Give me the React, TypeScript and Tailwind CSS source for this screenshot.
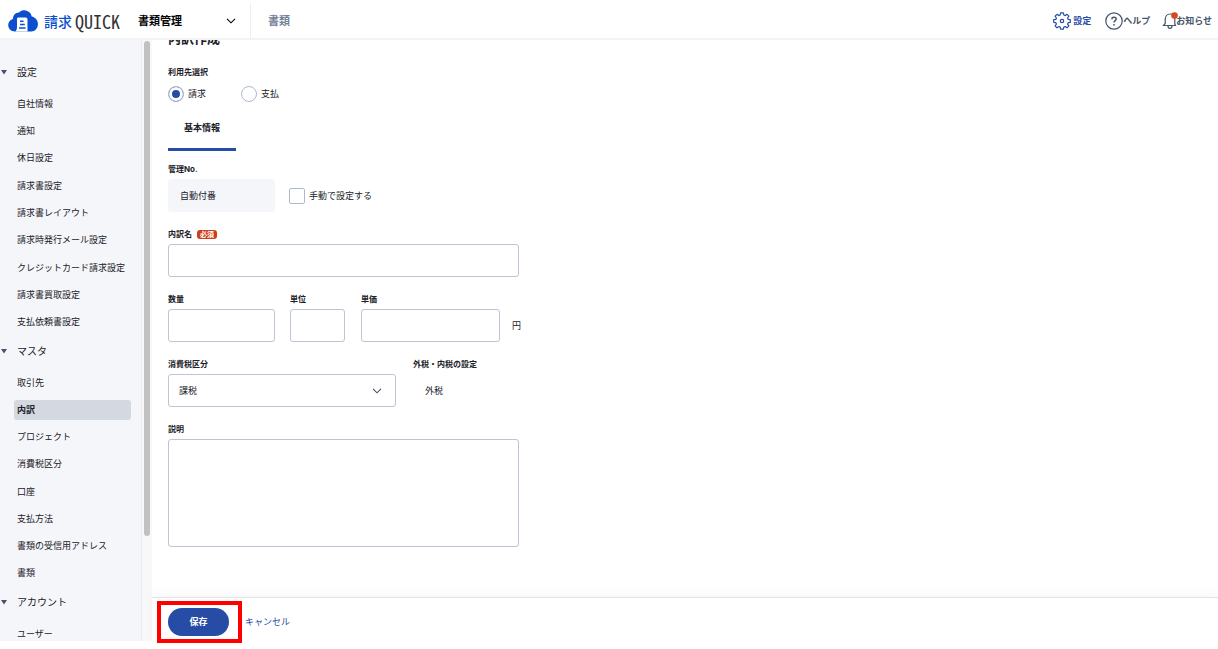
import { useState } from "react";
import type { ReactNode } from "react";

const sections = [
  {
    title: "設定",
    listHeight: "h-[246px]",
    items: [
      "自社情報",
      "通知",
      "休日設定",
      "請求書設定",
      "請求書レイアウト",
      "請求時発行メール設定",
      "クレジットカード請求設定",
      "請求書買取設定",
      "支払依頼書設定",
    ],
  },
  {
    title: "マスタ",
    listHeight: "h-[218px]",
    items: ["取引先", "内訳", "プロジェクト", "消費税区分", "口座", "支払方法", "書類の受信用アドレス", "書類"],
  },
  { title: "アカウント", listHeight: "h-[27px]", items: ["ユーザー"] },
];

const fieldStyle = "h-[33px] rounded-[3px] border border-[#bcc5d3] bg-white px-2.5 text-[9px] outline-none focus:border-[#264ca5]";

function Logo() {
  return (
    <a href="#" aria-label="請求QUICK" className="flex items-center gap-1.5">
      <svg viewBox="0 0 30 22" className="h-[22px] w-[30px]" aria-hidden="true">
        <path
          fill="#0b4fd0"
          d="M7 21.500C3 21.500 .2 18.600 .2 15C.2 12 2.200 9.700 4.900 9C4.900 5.300 7.600 2.500 11 2.500C12.700 .8 15 .2 17.300 .4C20.800 .8 23.300 3.300 23.700 6.500C27.300 7.200 29.900 10.200 29.900 14C29.900 18.300 27.200 21.500 23.200 21.500Z"
        />
        <path fill="#fff" d="M10.500 7.500H17.500C18.900 7.500 19.500 8.300 19.500 9.500V21.500H7.500C8.500 20.300 9 19 9 17V9C9 8 9.600 7.500 10.500 7.500Z" />
        <path stroke="#0b4fd0" strokeWidth="1.400" d="M12 11.300H15.500M12 14.500H16.800M11 18H17.500" />
      </svg>
      <span className="flex items-center gap-[3px] font-['Noto_Sans_CJK_JP',sans-serif] leading-5">
        <span className="text-[14px] font-medium text-[#0b4fd0]">請求</span>
        <span className="text-[18px] text-[#333] [font-feature-settings:'hwid']">QUICK</span>
      </span>
    </a>
  );
}

function Chevron({ className }: { className: string }) {
  return (
    <svg viewBox="0 0 10 6" className={className} fill="none" stroke="currentColor" strokeWidth="1.100" aria-hidden="true">
      <path d="M1 .8L5 4.800L9 .8" />
    </svg>
  );
}

function GearIcon() {
  return (
    <svg viewBox="0 0 18 18" className="size-[18px]" fill="none" stroke="currentColor" strokeWidth="1.200" strokeLinejoin="round" aria-hidden="true">
      <path d="M7.600 .8H10.400L10.800 3L12.200 3.600L14 2.300L15.900 4.200L14.600 6L15.200 7.400L17.300 7.700V10.300L15.200 10.700L14.600 12.100L15.900 13.900L14 15.800L12.200 14.500L10.800 15.100L10.400 17.200H7.600L7.200 15.100L5.800 14.500L4 15.800L2.100 13.900L3.400 12.100L2.800 10.700L.7 10.300V7.700L2.800 7.400L3.400 6L2.100 4.200L4 2.300L5.800 3.600L7.200 3Z" />
      <circle cx="9" cy="9" r="1.700" />
    </svg>
  );
}

function HelpIcon() {
  return (
    <svg viewBox="0 0 18 18" className="size-[18px]" fill="none" stroke="currentColor" strokeWidth="1.200" aria-hidden="true">
      <circle cx="9" cy="9" r="8.200" />
      <path strokeWidth="1.500" d="M6.900 7.300C6.900 5.900 7.800 5.200 9 5.200C10.200 5.200 11.200 5.900 11.200 7.100C11.200 8.600 9 8.700 9 10.500M9 11.900V13.400" />
    </svg>
  );
}

function BellIcon() {
  return (
    <svg viewBox="0 0 14 18" className="h-[18px] w-3.5 overflow-visible" fill="none" stroke="#44546a" strokeWidth="1.200" aria-hidden="true">
      <path d="M1.500 13.500H13.500L12.800 11.800V7.500C12.800 4.300 10.800 2 8 2C5.200 2 3.200 4.300 3.200 7.500V11.500L1.500 13.500ZM6 13.700C6 17.300 10 17.300 10 13.700" />
      <circle cx="12.500" cy="3.600" r="3.300" fill="#d4491d" stroke="none" />
    </svg>
  );
}

function Header() {
  return (
    <header className="flex h-10 shrink-0 items-center border-b-2 border-[#f3f3f4] pt-1 pr-1.5 pl-2">
      <Logo />
      <button type="button" className="ml-[18px] flex h-9 w-[113px] items-center justify-between border-r border-[#edeef1] pr-3.5 text-[11px] font-bold text-black">
        書類管理
        <Chevron className="h-[6px] w-2.5" />
      </button>
      <a href="#" className="ml-[17px] text-[11px] font-bold text-[#718096]">
        書類
      </a>
      <nav className="ml-auto flex items-center text-[9px] font-bold text-[#44546a]">
        <a href="#" className="mr-3.5 flex items-center gap-0.5 text-[#264ca5]">
          <GearIcon />
          設定
        </a>
        <a href="#" className="mr-3 flex items-center">
          <HelpIcon />
          ヘルプ
        </a>
        <a href="#" className="flex items-center">
          <BellIcon />
          お知らせ
        </a>
      </nav>
    </header>
  );
}

function Sidebar() {
  return (
    <aside className="flex w-[152px] shrink-0 overflow-hidden bg-[#f8f8f9]">
      <nav className="flex-1 border-r border-[#e9ebef] bg-[#f5f6fa] pt-[22px] text-[#1b2128]">
        {sections.map((section) => (
          <section key={section.title}>
            <h2>
              <button type="button" className="flex h-5 w-full items-center text-[10px]">
                <svg viewBox="0 0 6 5" className="mr-2.5 ml-px h-[5px] w-[6px]" fill="#44546a" aria-hidden="true">
                  <path d="M0 0H6L3 4.500Z" />
                </svg>
                {section.title}
              </button>
            </h2>
            <ul className={`mt-2 mb-[5px] flex flex-col text-[9px] ${section.listHeight}`}>
              {section.items.map((item) => (
                <li key={item} className="flex flex-1 items-center pr-2.5 pl-3.5">
                  <a
                    href="#"
                    className={
                      item === "内訳"
                        ? "block h-5 w-full rounded-[3px] bg-[#d4d8e1] pl-[3px] leading-5 font-bold"
                        : "block h-5 w-full pl-[3px] leading-5 whitespace-nowrap"
                    }
                  >
                    {item}
                  </a>
                </li>
              ))}
            </ul>
          </section>
        ))}
      </nav>
      <div className="flex w-2.5 flex-col items-center pt-px pb-[105px]">
        <div className="w-1.5 flex-1 rounded-full bg-[#c1c1c1]" />
      </div>
    </aside>
  );
}

function Field({ id, label, required, children }: { id: string; label: string; required?: boolean; children: ReactNode }) {
  return (
    <div>
      <label htmlFor={id} className="mb-1 flex h-3 items-center gap-[5px] text-[8px] leading-3 font-bold">
        {label}
        {required && <span className="rounded-[3px] bg-[#cb4017] px-[3px] text-[7px] leading-[9px] text-white">必須</span>}
      </label>
      {children}
    </div>
  );
}

function Radio({ value, label, checked, onSelect }: { value: string; label: string; checked: boolean; onSelect: (value: string) => void }) {
  return (
    <label className="flex items-center gap-1">
      <input
        type="radio"
        name="usage"
        value={value}
        checked={checked}
        onChange={() => onSelect(value)}
        className="size-4 appearance-none rounded-full border border-[#aeb9ca] bg-white checked:bg-[#264ca5] checked:shadow-[inset_0_0_0_3px_white]"
      />
      {label}
    </label>
  );
}

function BreakdownForm() {
  const [usage, setUsage] = useState("invoice");
  return (
    <form id="breakdown" className="flex-1 overflow-hidden px-4 text-[9px] text-[#1b2128]">
      <h1 className="-mt-3 text-[13px] leading-5 font-bold">内訳作成</h1>
      <fieldset className="mt-[18px]">
        <legend className="mb-2 text-[8px] leading-3 font-bold">利用先選択</legend>
        <div className="flex gap-[35px]">
          <Radio value="invoice" label="請求" checked={usage === "invoice"} onSelect={setUsage} />
          <Radio value="payment" label="支払" checked={usage === "payment"} onSelect={setUsage} />
        </div>
      </fieldset>
      <div role="tablist" className="mt-1.5 mb-3 flex">
        <button type="button" role="tab" aria-selected="true" className="h-[43px] border-b-[3px] border-[#264ca5] px-4 font-bold">
          基本情報
        </button>
      </div>
      <div className="flex flex-col gap-4">
        <Field id="number" label="管理No.">
          <div className="flex items-center gap-3.5">
            <input id="number" readOnly value="自動付番" className="h-[33px] w-[107px] rounded-[3px] bg-[#f5f6fa] px-3 outline-none" />
            <label className="flex items-center gap-1">
              <input type="checkbox" className="size-4 appearance-none rounded-[2px] border border-[#aeb9ca] bg-white checked:bg-[#264ca5]" />
              手動で設定する
            </label>
          </div>
        </Field>
        <Field id="name" label="内訳名" required>
          <input id="name" className={`block w-[351px] ${fieldStyle}`} />
        </Field>
        <div className="flex items-end">
          <Field id="quantity" label="数量">
            <input id="quantity" className={`mr-[15px] block w-[107px] ${fieldStyle}`} />
          </Field>
          <Field id="unit" label="単位">
            <input id="unit" className={`mr-4 block w-[55px] ${fieldStyle}`} />
          </Field>
          <Field id="price" label="単価">
            <input id="price" className={`mr-3 block w-[139px] ${fieldStyle}`} />
          </Field>
          <span className="leading-[33px]">円</span>
        </div>
        <div className="flex gap-[17px]">
          <Field id="tax" label="消費税区分">
            <div className="relative w-[228px]">
              <select id="tax" className={`block w-full appearance-none ${fieldStyle}`}>
                <option>課税</option>
              </select>
              <Chevron className="pointer-events-none absolute top-3.5 right-3.5 h-[6px] w-2.5 text-[#44546a]" />
            </div>
          </Field>
          <Field id="tax-mode" label="外税・内税の設定">
            <output id="tax-mode" className="block pl-3 leading-[33px]">
              外税
            </output>
          </Field>
        </div>
        <Field id="description" label="説明">
          <textarea id="description" className="block h-[108px] w-[351px] resize-none rounded-[3px] border border-[#bcc5d3] p-2.5 outline-none" />
        </Field>
      </div>
    </form>
  );
}

export default function App() {
  return (
    <div className="flex h-screen flex-col bg-white pb-2 font-['Inter','Noto_Sans_CJK_JP',sans-serif]">
      <Header />
      <div className="flex min-h-0 flex-1">
        <Sidebar />
        <main className="flex min-w-0 flex-1 flex-col">
          <BreakdownForm />
          <footer className="flex h-11 shrink-0 items-center border-t border-[#dfe3ea] px-4 pt-1 text-[9px] shadow-[0_-4px_10px_rgba(0,0,0,0.03)]">
            <div className="relative">
              <button type="submit" form="breakdown" className="block h-7 w-[61px] rounded-full bg-[#264ca5] font-bold text-white">
                保存
              </button>
              <div className="pointer-events-none absolute -top-[7px] -right-[13px] -bottom-[7px] -left-[11px] border-4 border-[#fe0000]" />
            </div>
            <a href="#" className="ml-4 text-[#264ca5]">
              キャンセル
            </a>
          </footer>
        </main>
      </div>
    </div>
  );
}
